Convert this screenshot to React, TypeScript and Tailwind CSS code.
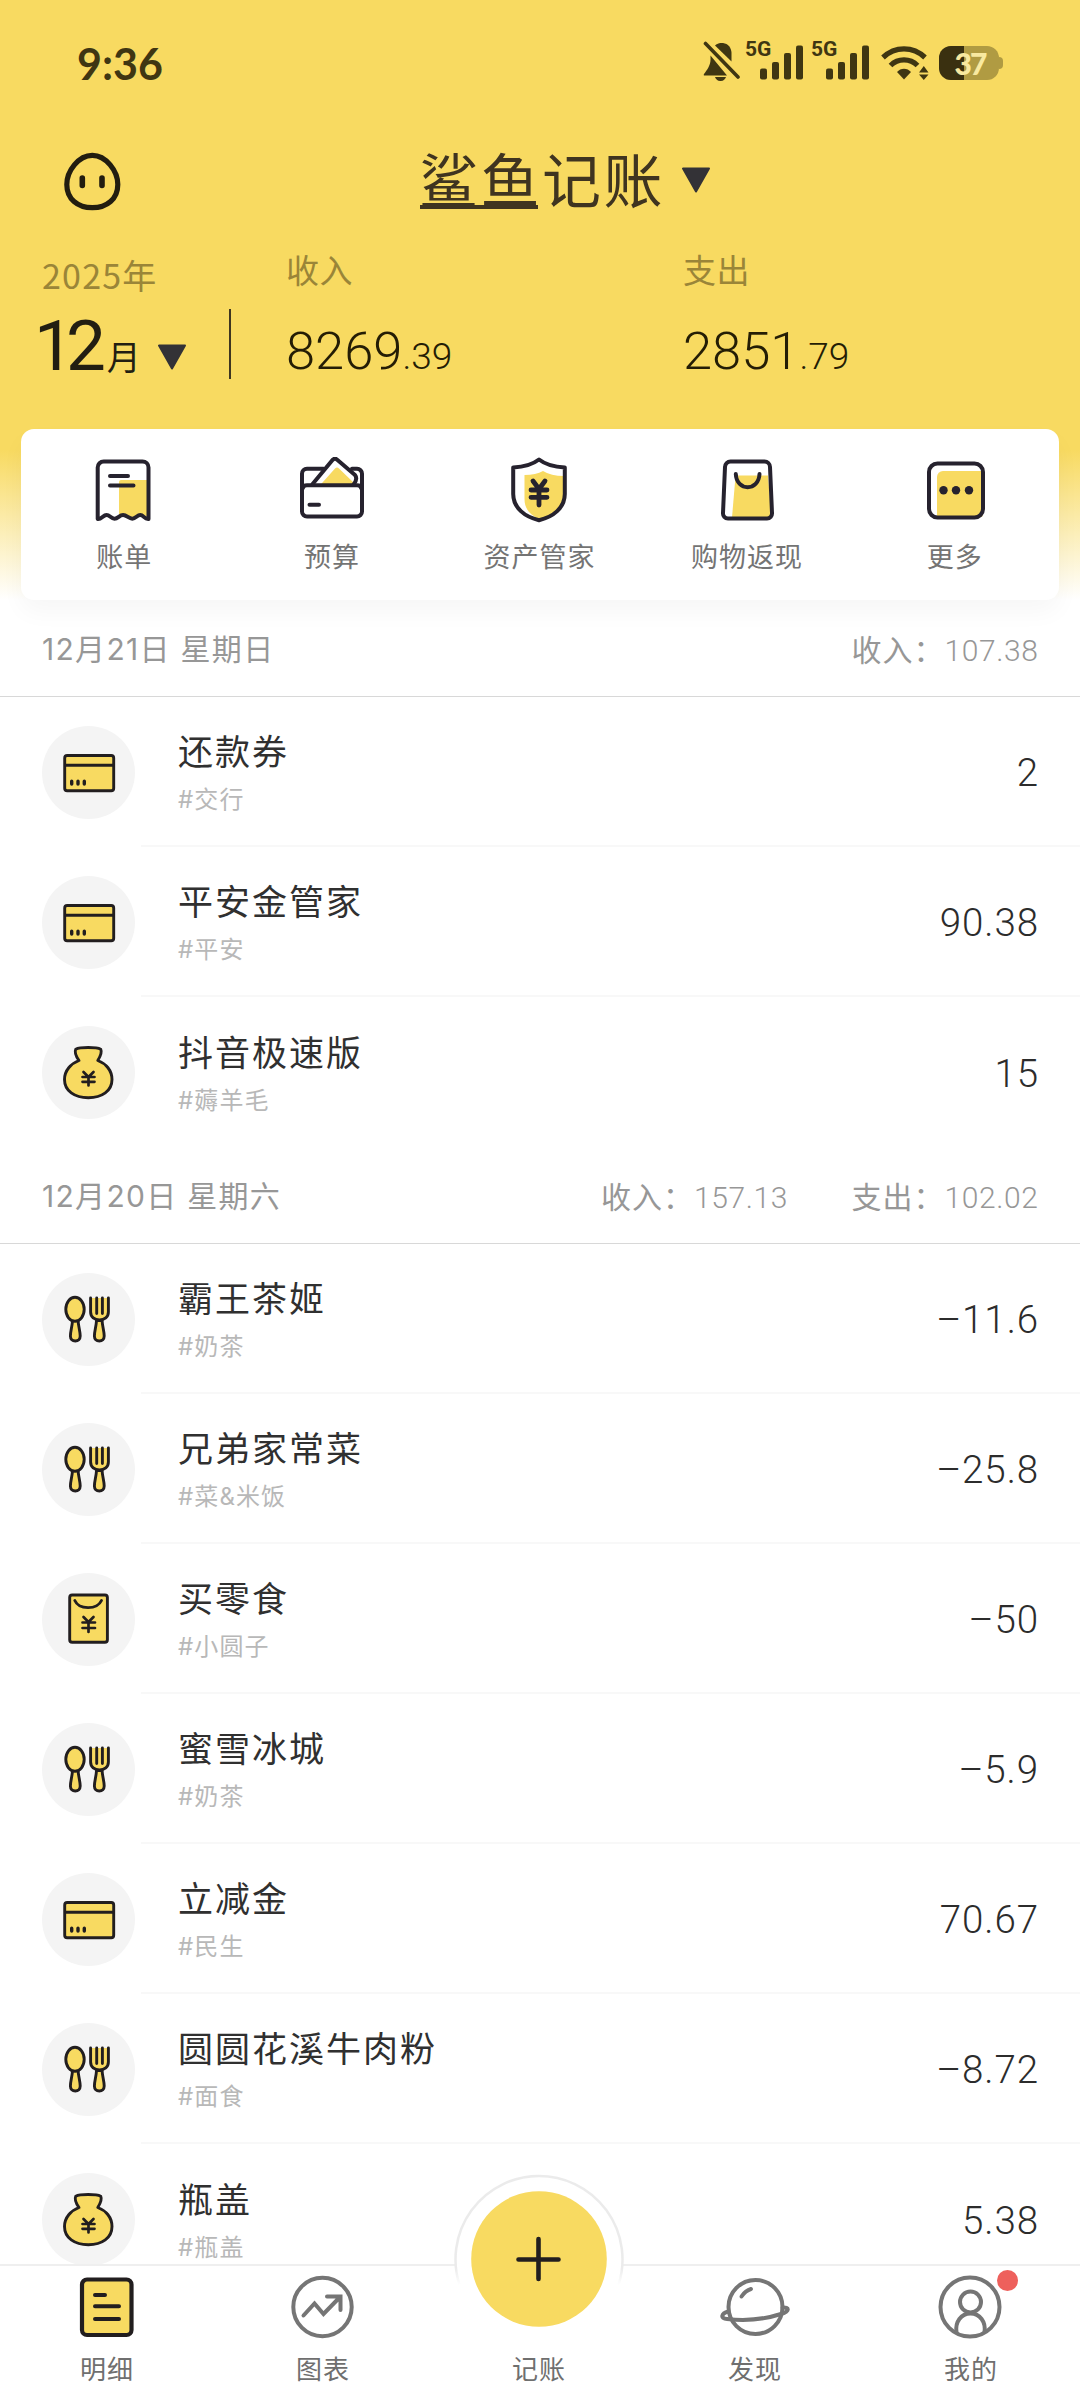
import type { ReactNode } from "react";

const INK = "#26222e";
const DARK = "#221e1f";
const YELLOW = "#f8da61";
const STATUS = "#3f3612";
const GREY = "#757575";

function Signal() {
  return (
    <div className="relative h-[40px] w-[59px]">
      <span className="absolute left-0 top-[1px] font-['Roboto'] text-[21px] font-bold leading-[15px] text-[#3f3612]">5G</span>
      <svg width="59" height="40" viewBox="0 0 59 40" fill={STATUS}>
        <rect x="15" y="27.500" width="7" height="11" rx="2" />
        <rect x="27" y="21" width="7" height="17.500" rx="2" />
        <rect x="39" y="12" width="7" height="26.500" rx="2" />
        <rect x="51" y="4.500" width="7" height="34" rx="2" />
      </svg>
    </div>
  );
}

function StatusBar() {
  return (
    <div className="flex h-[122px] items-start justify-between pl-[77px] pr-[77px] pt-[41px]">
      <div className="font-['Lato'] text-[43px] font-bold leading-[46px] text-[#3f3612]">9:36</div>
      <div className="flex items-start">
        <svg width="37" height="40" viewBox="0 0 37 40" fill={STATUS}>
          <path d="M12 4.500C14.500 2 18 1.800 20 2c5 .6 8.500 5 8.500 10v8.500z" />
          <path d="M7.500 14.500V19C7.500 24 4 29 1 33c-.7 1 0 1.500.5 1.500H24z" />
          <path d="M12 36h11c-1.500 3.500-3.500 4-5.500 4S13.500 39.500 12 36z" />
          <path d="M2.500 2.500 35 36" stroke={STATUS} strokeWidth="3.600" strokeLinecap="round" />
        </svg>
        <div className="ml-[5px]"><Signal /></div>
        <div className="ml-[7px]"><Signal /></div>
        <svg className="ml-[11px]" width="48" height="40" viewBox="0 0 48 40">
          <g fill="none" stroke={STATUS} strokeWidth="5.200">
            <path d="M2 16.500C14 5 32 5 44 16.500" />
            <path d="M9.500 24.500C17 17 29 17 36.500 24.500" />
          </g>
          <path d="M16 31c3.500-4.500 10.500-4.500 14 0l-7 7.500z" fill={STATUS} />
          <path d="M38 31.500 42.800 25l4.700 6.500zM38 33.500h9.500L42.800 39z" fill={STATUS} />
        </svg>
        <div className="ml-[10px] mt-[5px] flex items-center">
          <div className="relative flex h-[34px] w-[60px] items-center justify-center overflow-hidden rounded-[12px] bg-[#b09b42]">
            <div className="absolute left-0 top-0 h-full w-[25px] bg-[#3a3010]" />
            <span className="relative pl-[2px] font-['Lato'] text-[30px] font-black leading-none tracking-[-2px] text-[#f8e9a0]">37</span>
          </div>
          <div className="h-[12px] w-[4px] rounded-r-[4px] bg-[#b09b42]" />
        </div>
      </div>
    </div>
  );
}

function Triangle() {
  return (
    <svg width="30" height="26" viewBox="0 0 30 26">
      <path d="M2 1.500h26L15 24.500z" fill="#333236" stroke="#333236" strokeWidth="2" strokeLinejoin="round" />
    </svg>
  );
}

function TitleBar() {
  return (
    <div className="grid h-[118px] grid-cols-[420px_1fr] pt-[30px]">
      <svg className="ml-[64px]" width="57" height="59" viewBox="0 0 57 59" fill="none" stroke="#221d10">
        <path d="M28.300 3.300C42 3.300 53.800 19 53.800 32.500 53.800 47 43 55.700 28.300 55.700S2.800 47 2.800 32.500C2.800 19 14.500 3.300 28.300 3.300z" strokeWidth="5.200" />
        <path d="M18.300 26v7.500M38 26v7.500" strokeWidth="5.600" strokeLinecap="round" />
      </svg>
      <div className="flex items-start">
        <div className="relative w-[244px]">
          <span className="-ml-[1px] -mt-[3px] block whitespace-nowrap text-[59px] font-normal leading-[58px] tracking-[2.500px] text-[#3f3420]">鲨鱼记账</span>
          <div className="absolute left-0 top-[53px] h-[4px] w-[118px] bg-[#3f3420]" />
        </div>
        <div className="ml-[17px] mt-[15px]"><Triangle /></div>
      </div>
    </div>
  );
}

function Total({ label, whole, cents }: { label: string; whole: string; cents: string }) {
  return (
    <div>
      <div className="-ml-[1px] -mt-[1px] text-[33px] leading-[48px] tracking-[0.500px] text-[#9a8538]">{label}</div>
      <div className="-ml-[1px] mt-[28px] whitespace-nowrap font-['Roboto'] text-[52.500px] font-light leading-[60px] text-[#241d05]">
        {whole}
        <span className="text-[37px]">.{cents}</span>
      </div>
    </div>
  );
}

function Summary() {
  return (
    <div className="grid h-[189px] grid-cols-[229px_58px_397px_1fr]">
      <div className="pl-[42px] pt-[10px]">
        <div className="text-[34px] leading-[50px] tracking-[1.200px] text-[#9a8538]">2025年</div>
        <div className="flex items-baseline whitespace-nowrap text-[#221e12]">
          <span className="-ml-[8px] font-['Roboto'] text-[71px] font-normal leading-[92px] tracking-[-8px]">12</span>
          <span className="ml-[9px] text-[34px] leading-[40px]">月</span>
          <div className="ml-[16px]"><Triangle /></div>
        </div>
      </div>
      <div className="mt-[69px] h-[70px] w-[1.500px] bg-[#3f3620]" />
      <div className="pt-[6px]"><Total label="收入" whole="8269" cents="39" /></div>
      <div className="pt-[6px]"><Total label="支出" whole="2851" cents="79" /></div>
    </div>
  );
}

function QuickSvg({ children }: { children: ReactNode }) {
  return (
    <svg width="66" height="66" viewBox="0 0 66 66" fill="none" stroke={INK} strokeWidth="4" strokeLinecap="round" strokeLinejoin="round">
      {children}
    </svg>
  );
}

const quickActions: { label: string; icon: ReactNode }[] = [
  {
    label: "账单",
    icon: (
      <QuickSvg>
        <g transform="translate(4.500 2.500)">
          <path d="M23.500 22.500a2 2 0 0 1 2-2H52V57l-7-2-8 4-9-3-4.500 2z" fill={YELLOW} stroke="none" />
          <path d="M2.200 59.500V8a6 6 0 0 1 6-6H47a6 6 0 0 1 6 6v51.500c-4 .5-5-4-8.200-4s-4.500 3.700-8 3.700-5.500-3.700-9.200-3.700-5 3.700-8.600 3.700-4.600-3.700-8-3.700S6 60 2.200 59.500z" />
          <path d="M14.500 16.400h18M14.500 26H38" />
        </g>
      </QuickSvg>
    ),
  },
  {
    label: "预算",
    icon: (
      <QuickSvg>
        <g transform="translate(1 0)">
          <path d="M21.200 27 35 11.500q2-2 4 0L53 25v2z" fill={YELLOW} stroke="none" />
          <path d="M23.500 11.800H7a5 5 0 0 0-5 5v37.700a5 5 0 0 0 5 5h50a5 5 0 0 0 5-5V16.800a5 5 0 0 0-5-5h-5" />
          <path d="M3 31q.5-2.800 4-2.800h50q3.500 0 4 2.800" />
          <path d="M12.600 27 32.500 3q2.500-2.500 5 0L55 18q3 4-1.500 9.500" />
          <path d="M9.500 47.800h9.500" />
        </g>
      </QuickSvg>
    ),
  },
  {
    label: "资产管家",
    icon: (
      <QuickSvg>
        <g transform="translate(5 0)">
          <path d="M13.500 18Q25 18 32 14q8 5 21 5v19C53 51 42 60 29 62.500 19 58 13.500 52 13.500 42z" fill={YELLOW} stroke="none" />
          <path d="M28 2.500C21 8 12 10 2.200 10.500V37C2.200 51 14 60 28 63.200 42 60 53.800 51 53.800 37V10.500C44 10 35 8 28 2.500z" />
          <path d="M22 24l6 8 6-8M28 32v16M20 33h16M20 40.300h16" strokeWidth="4.800" />
        </g>
      </QuickSvg>
    ),
  },
  {
    label: "购物返现",
    icon: (
      <QuickSvg>
        <g transform="translate(7 2.500)">
          <path d="M14.600 16H47l3.500 42H11z" fill={YELLOW} stroke="none" />
          <path d="M9.500 2h34a5.500 5.500 0 0 1 5.500 5.500l2 46a5 5 0 0 1-5 5.500H7a5 5 0 0 1-5-5.500l2-46A5.500 5.500 0 0 1 9.500 2z" />
          <path d="M14.800 14.500C15.500 32 37.800 32 38.500 14.500" />
        </g>
      </QuickSvg>
    ),
  },
  {
    label: "更多",
    icon: (
      <QuickSvg>
        <g transform="translate(5 4.500)">
          <path d="M10 15.500a6 6 0 0 1 6-6h39.500V55H10z" fill={YELLOW} stroke="none" />
          <rect x="2" y="2" width="54" height="54" rx="8.500" />
          <g fill={INK} stroke="none">
            <circle cx="16.500" cy="28.700" r="4.200" />
            <circle cx="29" cy="28.700" r="4.200" />
            <circle cx="42" cy="28.700" r="4.200" />
          </g>
        </g>
      </QuickSvg>
    ),
  },
];

function QuickCard() {
  return (
    <div className="mx-[21px] grid h-[171px] grid-cols-5 rounded-[13px] bg-white shadow-[0_12px_24px_rgba(0,0,0,0.035)]">
      {quickActions.map((a) => (
        <div key={a.label} className="flex flex-col items-center pr-[1px] pt-[28px]">
          {a.icon}
          <div className="mt-[13px] text-[27px] leading-[40px] tracking-[1px] text-[#747474]">{a.label}</div>
        </div>
      ))}
    </div>
  );
}

function ListSvg({ children }: { children: ReactNode }) {
  return (
    <svg className="shrink-0 rounded-full bg-[#f4f4f4]" width="93" height="93" viewBox="0 0 93 93" fill={YELLOW} stroke={DARK} strokeWidth="2.900" strokeLinecap="round" strokeLinejoin="round">
      {children}
    </svg>
  );
}

function CardIcon() {
  return (
    <ListSvg>
      <rect x="22.700" y="29.500" width="49" height="35.200" rx="2.500" />
      <path d="M23 39.300h48.500" strokeLinecap="butt" />
      <path d="M29.700 55.200v2.800M36 55.200v2.800M42.300 55.200v2.800" strokeWidth="3.400" />
    </ListSvg>
  );
}

function PouchIcon() {
  return (
    <ListSvg>
      <path d="M37 34.500C34.500 31 32.500 26 33.700 23.200 38 21 54.500 21 58.700 23.200 60 26 58 31 55.800 34.500 64 37.500 70 44.500 70 53.500 70 65 60 71.700 46.300 71.700S22.500 65 22.500 53.500C22.500 44.500 29 37.500 37 34.500z" />
      <path d="M41.500 46l5 5 5-5M46.500 51v8.500M40.500 51h12M40.500 55.800h12" strokeWidth="2.700" />
    </ListSvg>
  );
}

function CutleryIcon() {
  return (
    <ListSvg>
      <path d="M30.500 47.500h5.600c.2 5.500 2.100 11 2.100 15.500 0 3-2 5-4.900 5s-4.900-2-4.900-5c0-4.500 1.900-10 2.100-15.500z" />
      <ellipse cx="33" cy="36.300" rx="9.200" ry="12" />
      <path d="M54.500 47.500h5.600c.2 5.500 2.100 11 2.100 15.500 0 3-2 5-4.900 5s-4.900-2-4.900-5c0-4.500 1.900-10 2.100-15.500z" />
      <path d="M48.600 25v14c0 5 4 8 8.900 8s8.900-3 8.900-8V25z" stroke="none" />
      <path d="M48.600 25v14c0 5 4 8 8.900 8s8.900-3 8.900-8V25M54.700 25v15.500M60.400 25v15.500" fill="none" />
    </ListSvg>
  );
}

function PacketIcon() {
  return (
    <ListSvg>
      <rect x="27.700" y="22" width="37.700" height="47.200" rx="2.500" />
      <path d="M32.800 27.500C37 37 55 37 59.500 27.500" fill="none" />
      <path d="M41.500 44l5 5 5-5M46.500 49v10M40.500 49.500h12.500M40.500 55h12.500" strokeWidth="2.700" />
    </ListSvg>
  );
}

type Entry = { icon: ReactNode; name: string; tag: string; amount: string };

function EntryRow({ icon, name, tag, amount, last }: Entry & { last?: boolean }) {
  return (
    <div className="flex h-[150px] items-stretch pl-[42px]">
      <div className="flex w-[99px] shrink-0 items-center">{icon}</div>
      <div className={last ? "flex flex-1 items-center justify-between pl-[37px] pr-[41px]" : "flex flex-1 items-center justify-between border-b-2 border-[#f8f8f8] pl-[37px] pr-[41px]"}>
        <div className="flex flex-col">
          <div className="text-[35px] leading-[52px] tracking-[2px] text-[#303030]">{name}</div>
          <div className="mt-[6px] font-['Inter','Noto_Sans_CJK_SC'] text-[24px] leading-[36px] tracking-[1.100px] text-[#b8b8b8]">{tag}</div>
        </div>
        <div className="pt-[3px] font-['Roboto'] text-[38.500px] font-light leading-[48px] tracking-[0.900px] text-[#2c2c2c]">{amount}</div>
      </div>
    </div>
  );
}

function DayHeader({ date, sums }: { date: string; sums: [string, string][] }) {
  return (
    <div className="flex h-[97px] items-center justify-between border-b border-[#d8d8d8] px-[42px] pt-[2px] text-[#979797]">
      <div className="font-['Inter','Noto_Sans_CJK_SC'] text-[30px] leading-[44px] tracking-[1.300px]">{date}</div>
      <div className="flex gap-[64px]">
        {sums.map(([label, value]) => (
          <div key={label} className="flex items-baseline">
            <span className="text-[30px] leading-[44px] tracking-[1px]">{label}：</span>
            <span className="-mr-[0.500px] font-['Roboto'] text-[30px] font-light leading-[44px] tracking-[0.600px]">{value}</span>
          </div>
        ))}
      </div>
    </div>
  );
}

const days: { date: string; sums: [string, string][]; entries: Entry[] }[] = [
  {
    date: "12月21日 星期日",
    sums: [["收入", "107.38"]],
    entries: [
      { icon: <CardIcon />, name: "还款券", tag: "#交行", amount: "2" },
      { icon: <CardIcon />, name: "平安金管家", tag: "#平安", amount: "90.38" },
      { icon: <PouchIcon />, name: "抖音极速版", tag: "#薅羊毛", amount: "15" },
    ],
  },
  {
    date: "12月20日 星期六",
    sums: [["收入", "157.13"], ["支出", "102.02"]],
    entries: [
      { icon: <CutleryIcon />, name: "霸王茶姬", tag: "#奶茶", amount: "–11.6" },
      { icon: <CutleryIcon />, name: "兄弟家常菜", tag: "#菜&米饭", amount: "–25.8" },
      { icon: <PacketIcon />, name: "买零食", tag: "#小圆子", amount: "–50" },
      { icon: <CutleryIcon />, name: "蜜雪冰城", tag: "#奶茶", amount: "–5.9" },
      { icon: <CardIcon />, name: "立减金", tag: "#民生", amount: "70.67" },
      { icon: <CutleryIcon />, name: "圆圆花溪牛肉粉", tag: "#面食", amount: "–8.72" },
      { icon: <PouchIcon />, name: "瓶盖", tag: "#瓶盖", amount: "5.38" },
    ],
  },
];

function NavSvg({ children }: { children: ReactNode }) {
  return (
    <svg width="76" height="66" viewBox="0 0 76 66" fill="none" stroke={GREY} strokeWidth="4" strokeLinecap="round" strokeLinejoin="round">
      {children}
    </svg>
  );
}

const tabs: { label: string; icon: ReactNode }[] = [
  {
    label: "明细",
    icon: (
      <NavSvg>
        <rect x="13" y="5.500" width="49.500" height="55.500" rx="5" fill={YELLOW} stroke={DARK} strokeWidth="4.200" />
        <path d="M26 21h10M26 32.200h24M26 45h24" stroke={DARK} />
      </NavSvg>
    ),
  },
  {
    label: "图表",
    icon: (
      <NavSvg>
        <circle cx="37.500" cy="33" r="29.200" />
        <path d="M18.500 41.500 29.500 29.500l9 10.500L55.500 22.500M42 22.500h13.500V36" strokeLinejoin="miter" />
      </NavSvg>
    ),
  },
  { label: "记账", icon: <div className="h-[66px]" /> },
  {
    label: "发现",
    icon: (
      <NavSvg>
        <circle cx="38.500" cy="33" r="27" />
        <path d="M24.500 22.500q4-6 9.500-7.500" />
        <path d="M11.500 37.500C4 39.500 3 44.500 10 45c18 2 37 .5 54-5 9-3 8.500-7 1.500-6.500" />
      </NavSvg>
    ),
  },
  {
    label: "我的",
    icon: (
      <NavSvg>
        <circle cx="37" cy="33" r="29.500" />
        <circle cx="37.500" cy="28" r="10.500" />
        <path d="M23.500 58C22 48 28 39.500 37.500 39.500S53 48 51.500 58" />
      </NavSvg>
    ),
  },
];

function TabBar() {
  return (
    <div className="relative grid h-[136px] shrink-0 grid-cols-5 border-t-2 border-[#efefef] bg-white">
      {tabs.map((t) => (
        <div key={t.label} className="flex flex-col items-center pr-[2px] pt-[8px]">
          {t.icon}
          <div className="relative mt-[9px] text-[26px] leading-[38px] tracking-[1px] text-[#6f6f6f]">{t.label}</div>
        </div>
      ))}
      <div className="absolute right-[62px] top-[4px] size-[21px] rounded-full bg-[#ee605c]" />
      <svg className="absolute left-[453px] top-[-93px]" width="172" height="172" viewBox="0 0 172 172">
        <defs>
          <linearGradient id="rim" x1="0" y1="0" x2="0" y2="112" gradientUnits="userSpaceOnUse">
            <stop offset="0.850" stopColor="#ebebeb" />
            <stop offset="1" stopColor="#ffffff" />
          </linearGradient>
        </defs>
        <circle cx="86" cy="86" r="84" fill="#ffffff" />
        <path d="M6.500 112A83.500 83.500 0 1 1 165.500 112" fill="none" stroke="url(#rim)" strokeWidth="2.500" />
        <circle cx="86" cy="86" r="67.800" fill={YELLOW} />
        <path d="M65.500 86.500h40M85.500 66v40" stroke={DARK} strokeWidth="4.600" strokeLinecap="round" />
      </svg>
    </div>
  );
}

export default function App() {
  return (
    <div className="flex h-[2400px] w-[1080px] flex-col overflow-hidden bg-white font-['Noto_Sans_CJK_SC',sans-serif]">
      <div className="h-[600px] shrink-0 bg-[linear-gradient(to_bottom,#f8da61_0,#f8da61_450px,#ffffff_600px)]">
        <StatusBar />
        <TitleBar />
        <Summary />
        <QuickCard />
      </div>
      <div className="min-h-0 flex-1 overflow-hidden">
        {days.map((d) => (
          <div key={d.date}>
            <DayHeader date={d.date} sums={d.sums} />
            {d.entries.map((e, i) => (
              <EntryRow key={e.name} {...e} last={i === d.entries.length - 1} />
            ))}
          </div>
        ))}
      </div>
      <TabBar />
    </div>
  );
}
